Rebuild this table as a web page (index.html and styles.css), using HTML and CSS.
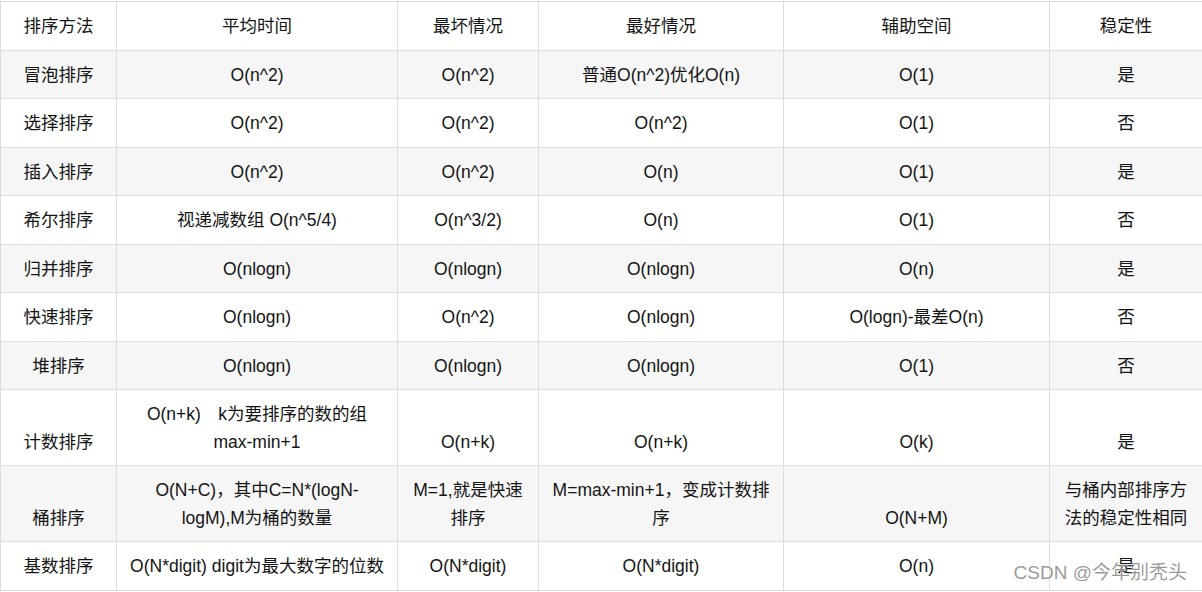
FILE: index.html
```html
<!DOCTYPE html>
<html lang="zh-CN">
<head>
<meta charset="utf-8">
<title>排序算法比较</title>
<link rel="stylesheet" href="styles.css">
</head>
<body>
<div class="page">
  <table class="sort-table">
    <colgroup>
      <col class="c1"><col class="c2"><col class="c3"><col class="c4"><col class="c5"><col class="c6">
    </colgroup>
    <thead>
      <tr><th>排序方法</th><th>平均时间</th><th>最坏情况</th><th>最好情况</th><th>辅助空间</th><th>稳定性</th></tr>
    </thead>
    <tbody>
      <tr><td>冒泡排序</td><td>O(n^2)</td><td>O(n^2)</td><td>普通O(n^2)优化O(n)</td><td>O(1)</td><td>是</td></tr>
      <tr><td>选择排序</td><td>O(n^2)</td><td>O(n^2)</td><td>O(n^2)</td><td>O(1)</td><td>否</td></tr>
      <tr><td>插入排序</td><td>O(n^2)</td><td>O(n^2)</td><td>O(n)</td><td>O(1)</td><td>是</td></tr>
      <tr><td>希尔排序</td><td>视递减数组 O(n^5/4)</td><td>O(n^3/2)</td><td>O(n)</td><td>O(1)</td><td>否</td></tr>
      <tr><td>归并排序</td><td>O(nlogn)</td><td>O(nlogn)</td><td>O(nlogn)</td><td>O(n)</td><td>是</td></tr>
      <tr><td>快速排序</td><td>O(nlogn)</td><td>O(n^2)</td><td>O(nlogn)</td><td>O(logn)-最差O(n)</td><td>否</td></tr>
      <tr><td>堆排序</td><td>O(nlogn)</td><td>O(nlogn)</td><td>O(nlogn)</td><td>O(1)</td><td>否</td></tr>
      <tr><td>计数排序</td><td>O(n+k)　k为要排序的数的组<br>max-min+1</td><td>O(n+k)</td><td>O(n+k)</td><td>O(k)</td><td>是</td></tr>
      <tr><td>桶排序</td><td>O(N+C)，其中C=N*(logN-<br>logM),M为桶的数量</td><td>M=1,就是快速<br>排序</td><td>M=max-min+1，变成计数排<br>序</td><td>O(N+M)</td><td>与桶内部排序方<br>法的稳定性相同</td></tr>
      <tr><td>基数排序</td><td>O(N*digit) digit为最大数字的位数</td><td>O(N*digit)</td><td>O(N*digit)</td><td>O(n)</td><td>是</td></tr>
    </tbody>
  </table>
  <div class="watermark">CSDN @今年别秃头</div>
</div>
</body>
</html>
```

FILE: styles.css
```css
html, body {
  margin: 0;
  padding: 0;
  background: #ffffff;
}

body {
  font-family: "Liberation Sans", Arial, "Noto Sans CJK SC", sans-serif;
  color: #141414;
}

.page {
  position: relative;
  width: 1202px;
  height: 592px;
  padding-top: 1px;
  box-sizing: border-box;
}

.sort-table {
  width: 1202px;
  border-collapse: collapse;
  table-layout: fixed;
  font-size: 17.5px;
  line-height: 27.5px;
}

.c1 { width: 116px; }
.c2 { width: 281px; }
.c3 { width: 141px; }
.c4 { width: 245px; }
.c5 { width: 266px; }
.c6 { width: 153px; }

.sort-table th,
.sort-table td {
  border: 1px solid #dddddd;
  padding: 11px 8px 9px;
  text-align: center;
  vertical-align: bottom;
  font-weight: normal;
}

.sort-table tbody tr:nth-child(odd) {
  background: #f6f6f6;
}

.watermark {
  position: absolute;
  right: 15px;
  bottom: 7px;
  font-size: 19px;
  line-height: 24px;
  color: rgba(120, 120, 120, 0.75);
  text-shadow: 0 0 1px rgba(255, 255, 255, 0.8);
  white-space: nowrap;
}
```
